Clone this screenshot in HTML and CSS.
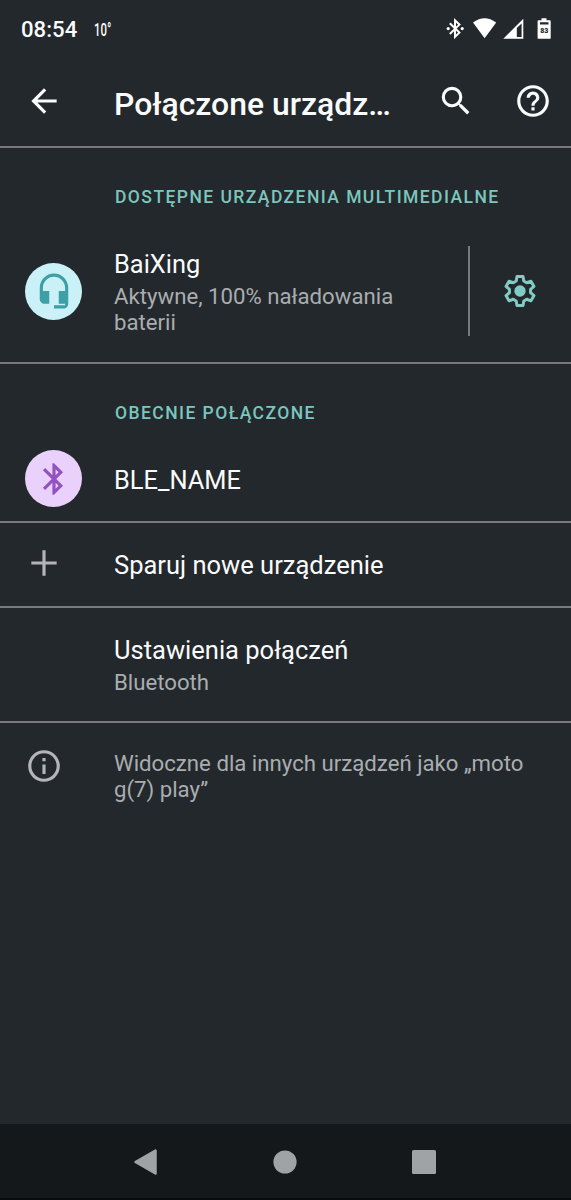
FILE: index.html
```html
<!DOCTYPE html>
<html lang="pl">
<head>
<meta charset="utf-8">
<title>Połączone urządzenia</title>
<link rel="stylesheet" href="styles.css">
</head>
<body>
<div class="screen">
  <div class="status">
    <span class="clock">08:54</span>
    <span class="temp">10°</span>
    <svg class="status-icons" viewBox="440 10 120 38">
      <path fill="none" stroke="#fff" stroke-width="2" d="M449.800 23.200l9.600 9.400-4.400 4.200V20.400l4.400 4.200-9.600 9.400"/>
      <circle cx="448.200" cy="28.600" r="1.600"/><circle cx="462.200" cy="28.600" r="1.600"/>
      <path d="M473 22.600Q484.500 14 496.200 22.600L484.600 38.300z"/>
      <path fill-rule="evenodd" d="M503.300 38.700L523.300 18.800V38.700zM516.800 28V37h4.800V23.600z"/>
      <path fill-rule="evenodd" d="M541.500 18.300h5v2h3.300q.9 0 .9.900v16.700q0 .9-.9.900h-11.300q-.9 0-.9-.9V21.200q0-.9.900-.9h3zM540 22.300v2.300h8.500v-2.300z"/>
      <text x="544.200" y="32.700" class="charge">83</text>
    </svg>
  </div>
  <header class="appbar">
    <svg class="icon" viewBox="0 0 24 24"><path d="M20 11H7.830l5.590-5.590L12 4l-8 8 8 8 1.410-1.410L7.830 13H20v-2z"/></svg>
    <h1>Połączone urządz…</h1>
    <svg class="icon" viewBox="0 0 24 24"><path d="M15.500 14h-.79l-.28-.27A6.471 6.471 0 0 0 16 9.500 6.500 6.500 0 1 0 9.500 16c1.610 0 3.090-.59 4.230-1.570l.27.28v.79l5 4.990L20.490 19l-4.990-5zm-6 0C7.010 14 5 11.990 5 9.500S7.010 5 9.500 5 14 7.010 14 9.500 11.990 14 9.500 14z"/></svg>
    <svg class="icon help" viewBox="0 0 24 24"><path d="M11 18h2v-2h-2v2zm1-16C6.480 2 2 6.480 2 12s4.480 10 10 10 10-4.480 10-10S17.520 2 12 2zm0 18c-4.410 0-8-3.590-8-8s3.590-8 8-8 8 3.590 8 8-3.590 8-8 8zm0-14c-2.210 0-4 1.790-4 4h2c0-1.100.9-2 2-2s2 .9 2 2c0 2-3 1.750-3 5h2c0-2.250 3-2.500 3-5 0-2.210-1.790-4-4-4z"/></svg>
  </header>
  <main>
    <section class="media">
      <h2>Dostępne urządzenia multimedialne</h2>
      <div class="row device">
        <div class="lead"><span class="avatar cyan"><svg class="icon" viewBox="0 0 24 24"><path d="M12 1c-4.970 0-9 4.030-9 9v7c0 1.660 1.340 3 3 3h3v-8H5v-2c0-3.870 3.130-7 7-7s7 3.130 7 7v2h-4v8h4v1h-7v2h6c1.660 0 3-1.340 3-3V10c0-4.970-4.030-9-9-9z"/></svg></span></div>
        <div class="body"><div class="name">BaiXing</div><div class="note">Aktywne, 100% naładowania baterii</div></div>
        <div class="action"><svg class="icon" viewBox="-12 -12 24 24"><path class="gear" d="M1.900-9.100L2.400-6.300 4.260-5.230 6.930-6.200 8.830-2.900 6.660-1.070V1.070L8.830 2.900 6.930 6.200 4.260 5.230 2.400 6.300 1.900 9.100H-1.900L-2.400 6.300-4.260 5.230-6.930 6.200-8.830 2.900-6.660 1.070V-1.070L-8.830-2.900-6.930-6.200-4.260-5.230-2.400-6.300-1.900-9.100z"/><circle r="3.600"/></svg></div>
      </div>
    </section>
    <section class="connected">
      <h2>Obecnie połączone</h2>
      <div class="row">
        <div class="lead"><span class="avatar violet"><svg class="icon" viewBox="0 0 24 24"><path d="M17.710 7.710L12 2h-1v7.590L6.410 5 5 6.410 10.590 12 5 17.590 6.410 19 11 14.410V22h1l5.710-5.710-4.300-4.290 4.300-4.290zM13 5.830l1.880 1.880L13 9.590V5.830zm1.880 10.460L13 18.170v-3.760l1.880 1.880z"/></svg></span></div>
        <div class="body"><div class="name">BLE_NAME</div></div>
      </div>
    </section>
    <section class="row pair">
      <div class="lead"><svg class="icon" viewBox="0 0 24 24"><path d="M20 13h-7v7h-2v-7H4v-2h7V4h2v7h7z"/></svg></div>
      <div class="body"><div class="name">Sparuj nowe urządzenie</div></div>
    </section>
    <section class="row prefs">
      <div class="lead"></div>
      <div class="body"><div class="name">Ustawienia połączeń</div><div class="note">Bluetooth</div></div>
    </section>
    <div class="row info">
      <div class="lead"><svg class="icon" viewBox="0 0 24 24"><path d="M11 7h2v2h-2zm0 4h2v6h-2zm1-9C6.480 2 2 6.480 2 12s4.480 10 10 10 10-4.480 10-10S17.520 2 12 2zm0 18c-4.410 0-8-3.590-8-8s3.590-8 8-8 8 3.590 8 8-3.590 8-8 8z"/></svg></div>
      <div class="body"><div class="note">Widoczne dla innych urządzeń jako „moto g(7) play”</div></div>
    </div>
  </main>
  <nav class="navbar">
    <svg viewBox="0 0 26 28"><path d="M22.500 2.500v23L2.500 14z" stroke="#a0a3a5" stroke-width="2.500" stroke-linejoin="round"/></svg>
    <svg viewBox="0 0 26 28"><circle cx="13" cy="14" r="11.600"/></svg>
    <svg viewBox="0 0 26 28"><rect x="1" y="2" width="24" height="24" rx="1.500"/></svg>
  </nav>
</div>
</body>
</html>
```
FILE: styles.css
```css
* { box-sizing: border-box; }
body { margin: 0; background: #23282c; font-family: Roboto, sans-serif; color: #fafbfb; }
h1, h2 { margin: 0; font-weight: 500; }
svg { display: block; fill: currentColor; flex: none; }
.screen { width: 571px; height: 1200px; display: flex; flex-direction: column; overflow: hidden; }
.status { height: 58px; display: flex; align-items: center; padding-left: 21px; flex: none; }
.clock { font-size: 22.2px; font-weight: 500; width: 73px; }
.temp { font-size: 19px; font-weight: 500; transform: scaleX(.6); transform-origin: left; }
.status-icons { width: 120px; height: 38px; margin-left: auto; margin-right: 11px; color: #fff; }
.charge { font-size: 7px; font-weight: 900; fill: #23282c; text-anchor: middle; }
.appbar { height: 90px; flex: none; display: flex; align-items: center; padding: 0 19px 2px 25px; border-bottom: 2px solid #777b7f; }
.appbar h1 { font-size: 31.9px; line-height: 40px; margin-left: 51px; flex: 1; white-space: nowrap; padding-top: 5px; }
.icon { width: 38px; height: 38px; }
.help { margin-left: 39px; }
main { flex: 1; }
section { border-bottom: 2px solid #777b7f; }
h2 { font-size: 17.5px; line-height: 22px; letter-spacing: 1.44px; text-transform: uppercase; color: #7bc6bd; padding-left: 115px; }
.row { display: flex; }
.lead { width: 114px; flex: none; padding-left: 25px; }
.body { flex: 1; }
.name { font-size: 25.4px; line-height: 32px; }
.note { font-size: 22.2px; line-height: 26px; color: #aaadaf; }
.media { height: 215.5px; padding-top: 38px; }
.device { margin-top: 38px; height: 90px; align-items: center; }
.device .body { padding-right: 50px; }
.device .note { margin-top: 3px; }
.avatar { width: 57px; height: 57px; border-radius: 50%; display: flex; align-items: center; justify-content: center; }
.cyan { background: #caf1f8; color: #3ca0a5; }
.violet { background: #e9d1fc; color: #9153c0; }
.action { width: 103px; height: 90px; border-left: 2px solid #777b7f; display: flex; align-items: center; justify-content: center; padding-right: 1px; color: #80cbc4; }
.gear { fill: none; stroke: currentColor; stroke-width: 1.9; stroke-linejoin: round; }
.connected { height: 159.500px; padding-top: 38.500px; }
.connected .row { align-items: center; margin-top: 26px; height: 57px; }
.connected .name { padding-top: 3px; }
.pair { height: 85px; align-items: center; }
.pair .icon { margin-top: -3px; }
.pair .lead, .info .lead { color: #b3b6b8; }
.prefs { height: 115px; padding-top: 26px; }
.prefs .note { margin-top: 3px; }
.pair .name, .prefs .name { font-size: 25.5px; }
.info { padding-top: 24px; }
.info .body { padding-top: 3px; padding-right: 40px; }
.navbar { height: 76px; flex: none; display: flex; justify-content: space-between; padding: 24px 134px 0 133px; background: #14181b; color: #a0a3a5; border-bottom: 2px solid #090b0d; }
.navbar svg { width: 26px; height: 28px; }
```
